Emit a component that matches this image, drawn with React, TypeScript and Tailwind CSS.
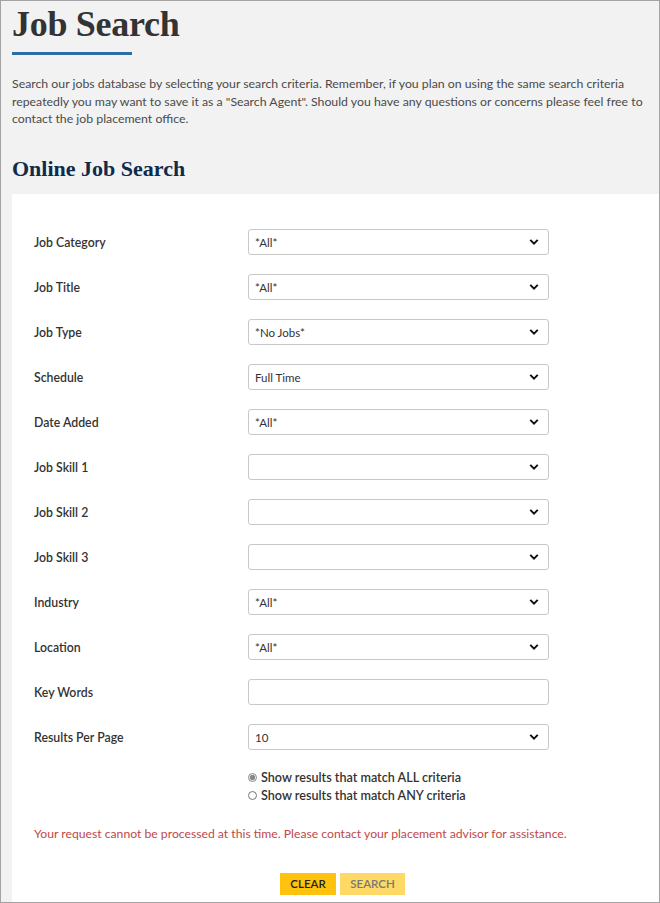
import { ChangeEvent, useState } from "react";

const SANS = { fontFamily: "Lato, 'Open Sans', sans-serif" };
const SERIF = { fontFamily: "'Liberation Serif', 'DejaVu Serif', serif" };

type Field = { label: string; value?: string; kind?: "select" | "text" };

const FIELDS: Field[] = [
  { label: "Job Category", value: "*All*" },
  { label: "Job Title", value: "*All*" },
  { label: "Job Type", value: "*No Jobs*" },
  { label: "Schedule", value: "Full Time" },
  { label: "Date Added", value: "*All*" },
  { label: "Job Skill 1", value: "" },
  { label: "Job Skill 2", value: "" },
  { label: "Job Skill 3", value: "" },
  { label: "Industry", value: "*All*" },
  { label: "Location", value: "*All*" },
  { label: "Key Words", kind: "text" },
  { label: "Results Per Page", value: "10" },
];

function Chevron() {
  return (
    <svg
      aria-hidden
      viewBox="0 0 12 8"
      className="pointer-events-none absolute right-[10px] top-1/2 h-[7px] w-[10px] -translate-y-1/2"
    >
      <path d="M1.5 1.5 6 6l4.5-4.5" fill="none" stroke="#111" strokeWidth="2.4" />
    </svg>
  );
}

function SelectBox({ value }: { value: string }) {
  return (
    <div className="relative h-[26px] w-[301px]">
      <select
        defaultValue={value}
        className="h-full w-full appearance-none rounded-[3px] border border-[#c8c8c8] bg-white pl-[6px] text-[11.5px] text-[#333] outline-none"
        style={SANS}
      >
        <option value={value}>{value}</option>
      </select>
      <Chevron />
    </div>
  );
}

export default function App() {
  const [match, setMatch] = useState("all");
  const onMatch = (e: ChangeEvent<HTMLInputElement>) => setMatch(e.target.value);

  return (
    <div className="h-[903px] w-[660px] overflow-hidden border border-[#a3a3a3] bg-[#f2f2f2]" style={SANS}>
      <div className="px-[11px]">
        <h1 className="pt-[1px] text-[36px] font-bold leading-[44px] tracking-[-0.3px] text-[#333]" style={SERIF}>
          Job Search
        </h1>
        <div className="mt-[6px] h-[3px] w-[120px] bg-[#2e6da4]" />
        <p className="mt-[20px] text-[12.3px] leading-[17.5px] text-[#4a4a4a]">
          Search our jobs database by selecting your search criteria. Remember, if you plan on using the same
          search criteria repeatedly you may want to save it as a "Search Agent". Should you have any questions or
          concerns please feel free to contact the job placement office.
        </p>
        <h2 className="mt-[27px] text-[22px] font-bold leading-[28px] text-[#0f2b4c]" style={SERIF}>
          Online Job Search
        </h2>
      </div>

      <div className="ml-[11px] mt-[11px] h-[720px] bg-white pl-[22px] pt-[35px]">
        <div className="flex flex-col gap-[19px]">
          {FIELDS.map((f) => (
            <div key={f.label} className="grid grid-cols-[214px_auto] items-center">
              <span className="pt-[3px] text-[12.3px] font-semibold text-[#333]">{f.label}</span>
              {f.kind === "text" ? (
                <input
                  type="text"
                  className="h-[26px] w-[301px] rounded-[3px] border border-[#c8c8c8] bg-white outline-none"
                />
              ) : (
                <SelectBox value={f.value ?? ""} />
              )}
            </div>
          ))}
        </div>

        <div className="ml-[214px] mt-[19px] flex flex-col text-[12.6px] font-semibold leading-[18px] text-[#333]">
          <label className="flex items-center gap-[4px]">
            <input
              type="radio"
              name="match"
              value="all"
              checked={match === "all"}
              onChange={onMatch}
              className="m-0 h-[9px] w-[9px] accent-[#888]"
            />
            Show results that match ALL criteria
          </label>
          <label className="flex items-center gap-[4px]">
            <input
              type="radio"
              name="match"
              value="any"
              checked={match === "any"}
              onChange={onMatch}
              className="m-0 h-[9px] w-[9px] accent-[#888]"
            />
            Show results that match ANY criteria
          </label>
        </div>

        <p className="mt-[20px] text-[12.2px] text-[#c0474a]">
          Your request cannot be processed at this time. Please contact your placement advisor for assistance.
        </p>

        <div className="ml-[246px] mt-[30px] flex gap-[4px]">
          <button className="h-[22px] w-[56px] bg-[#ffc20e] text-[11.5px] font-semibold text-[#222]">CLEAR</button>
          <button className="h-[22px] w-[65px] bg-[#ffd966] text-[11.5px] font-semibold text-[#777]">SEARCH</button>
        </div>
      </div>
    </div>
  );
}
